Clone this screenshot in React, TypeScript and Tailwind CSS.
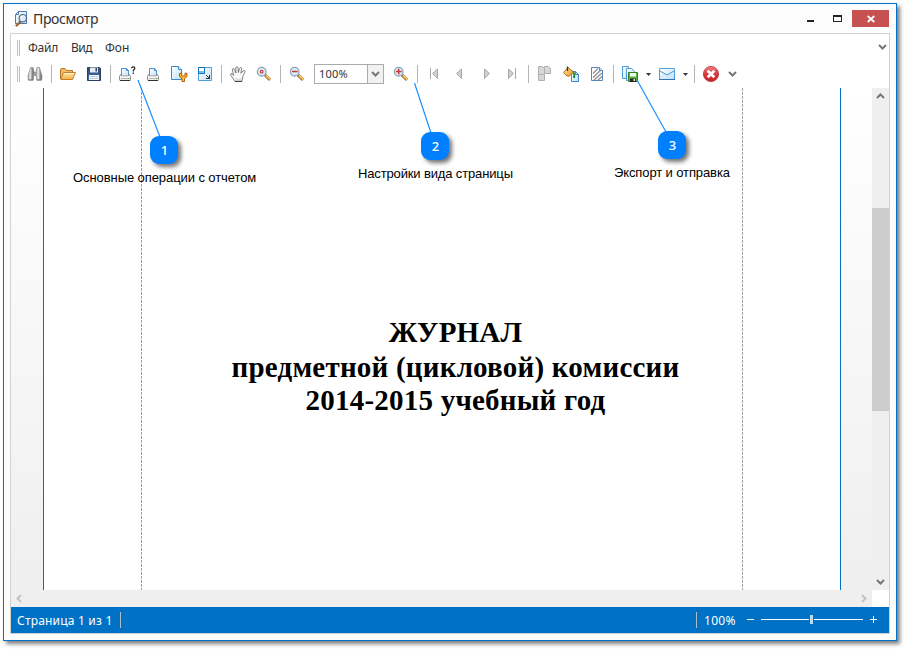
import React from "react";

type Kids = { children?: React.ReactNode };

function Glyph({ children, w = 16 }: Kids & { w?: number }) {
  return (
    <svg width={w} height="16" viewBox={`0 0 ${w} 16`} className="block shrink-0 overflow-visible">
      {children}
    </svg>
  );
}

function Slot({ children }: Kids) {
  return <div className="flex h-[26px] w-[26px] shrink-0 items-center justify-center">{children}</div>;
}

function Sep() {
  return (
    <div className="flex w-[7px] shrink-0 items-center pl-[3px]">
      <div className="h-[18px] w-px bg-[#b5b5b5]" />
    </div>
  );
}

function Grip() {
  return <div className="mr-[2px] ml-[6px] h-[16px] w-[3px] shrink-0 border-x border-[#bdbdbd]" />;
}

function Chevron({ dir = "down", color = "#777777" }: { dir?: "down" | "up" | "left" | "right"; color?: string }) {
  const d = {
    down: "M1 2 L4.5 5.5 L8 2",
    up: "M1 6 L4.5 2.5 L8 6",
    left: "M6 1 L2.5 4.5 L6 8",
    right: "M3 1 L6.5 4.5 L3 8",
  }[dir];
  return (
    <svg width="9" height="9" viewBox="0 0 9 9" className="block shrink-0">
      <path d={d} fill="none" stroke={color} strokeWidth="2" />
    </svg>
  );
}

function DropArrow() {
  return (
    <div className="flex w-[11px] shrink-0 items-center pl-[3px]">
      <svg width="5" height="3" viewBox="0 0 5 3" className="block">
        <path d="M0 0h5L2.5 3z" fill="#333" />
      </svg>
    </div>
  );
}

function Defs() {
  return (
    <svg width="0" height="0" className="absolute">
      <defs>
        <linearGradient id="paper" x1="0" y1="0" x2="1" y2="1">
          <stop offset="0" stopColor="#ffffff" />
          <stop offset="1" stopColor="#bfe0f8" />
        </linearGradient>
        <linearGradient id="folder" x1="0" y1="0" x2="0" y2="1">
          <stop offset="0" stopColor="#ffe7a6" />
          <stop offset="1" stopColor="#efb04c" />
        </linearGradient>
        <linearGradient id="metal" x1="0" y1="0" x2="0" y2="1">
          <stop offset="0" stopColor="#ffffff" />
          <stop offset="1" stopColor="#c4c4c4" />
        </linearGradient>
        <linearGradient id="tube" x1="0" y1="0" x2="1" y2="0">
          <stop offset="0" stopColor="#8a8a8a" />
          <stop offset="0.35" stopColor="#f4f4f4" />
          <stop offset="0.7" stopColor="#8c8c8c" />
          <stop offset="1" stopColor="#606060" />
        </linearGradient>
        <linearGradient id="navy" x1="0" y1="0" x2="0" y2="1">
          <stop offset="0" stopColor="#304a6c" />
          <stop offset="1" stopColor="#3f70aa" />
        </linearGradient>
        <linearGradient id="gold" x1="0" y1="0" x2="1" y2="1">
          <stop offset="0" stopColor="#fff2b0" />
          <stop offset="1" stopColor="#e88a10" />
        </linearGradient>
        <linearGradient id="red" x1="0" y1="0" x2="0" y2="1">
          <stop offset="0" stopColor="#ee8585" />
          <stop offset="0.5" stopColor="#d63b40" />
          <stop offset="1" stopColor="#c81f27" />
        </linearGradient>
      </defs>
    </svg>
  );
}

function AppIcon() {
  return (
    <Glyph>
      <path d="M4.500 .5H12.500V12.500H1.500V3.500z" fill="url(#paper)" stroke="#4d7ab5" />
      <path d="M4.500 .5V3.500H1.500" fill="none" stroke="#4d7ab5" />
      <path d="M6.500 10.500L2 15" stroke="#8a4b1c" strokeWidth="2.400" />
      <path d="M6 10.500L2 14.500" stroke="#e39a48" strokeWidth="1" />
      <circle cx="8.800" cy="7.200" r="3.700" fill="#dceefb" fillOpacity=".9" stroke="#56667a" strokeWidth="1.200" />
      <path d="M6.800 7.200A2 2 0 0 1 8.800 5.200" stroke="#fff" fill="none" />
    </Glyph>
  );
}

function Binoculars() {
  return (
    <Glyph>
      <path d="M3.500 1.500H6L7 5.500L6.300 14H1.300L1 10z" fill="url(#tube)" stroke="#8e8e8e" strokeWidth=".7" />
      <path d="M10 1.500H12.500L15 10L14.700 14H9.700L9 5.500z" fill="url(#tube)" stroke="#8e8e8e" strokeWidth=".7" />
      <path d="M7 6H9V10H7z" fill="#9b9b9b" />
      <path d="M1.500 14H6.300M9.700 14H14.500" stroke="#777" />
    </Glyph>
  );
}

function FolderOpen() {
  return (
    <Glyph>
      <path d="M.5 13V3.500Q.5 2.500 1.500 2.500H5L6.500 4.500H12.500V7" fill="#f3ba62" stroke="#b8752a" />
      <path d="M3.500 6.500H15.500L12.500 13.500H.8z" fill="url(#folder)" stroke="#c2802c" />
      <path d="M4.300 7.500H14" stroke="#fff3cf" />
    </Glyph>
  );
}

function Floppy() {
  return (
    <Glyph>
      <path d="M1.500 1.500H13.500L14.500 2.500V14.500H1.500z" fill="url(#navy)" stroke="#2a3f5c" />
      <path d="M4 1.500H12V6.500H4z" fill="#e4ebf3" />
      <path d="M9.500 2H11V5.500H9.500z" fill="#2e4462" />
      <path d="M3 9H13V14H3z" fill="#fafcff" />
      <path d="M3.500 10.500H12.500M3.500 12.500H12.500" stroke="#b9c8d8" />
    </Glyph>
  );
}

function PrinterShape() {
  return (
    <>
      <path d="M4.500 2.500H9.500L11.500 4.500V10.500H4.500z" fill="url(#paper)" stroke="#4b93d4" />
      <path d="M9.500 2.500V4.500H11.500" fill="none" stroke="#4b93d4" />
      <path d="M3.500 8.500H4.500V10H11.500V8.500H12.500L13.500 10.500V13.500Q13.500 14.500 12.500 14.500H3.500Q2.500 14.500 2.500 13.500V10.500z" fill="#ececec" stroke="#8b8b8b" />
      <path d="M3.500 11H12.500" stroke="#ffffff" />
      <path d="M4 12.500H12" stroke="#b5b5b5" />
      <path d="M11 12.500H12.500" stroke="#55b848" />
      <path d="M3 14.500H13" stroke="#333" />
    </>
  );
}

function Printer() {
  return (
    <Glyph>
      <PrinterShape />
    </Glyph>
  );
}

function PrinterQuery() {
  return (
    <Glyph>
      <g transform="translate(-2 0)">
        <PrinterShape />
      </g>
      <path d="M12.700 2.300Q12.700 .8 14.200 .8Q15.800 .8 15.800 2.300Q15.800 3.400 14.300 4.200V5.400M14.300 6.500V8" fill="none" stroke="#222" strokeWidth="1.300" />
    </Glyph>
  );
}

function PageSetup() {
  return (
    <Glyph>
      <path d="M.5 .5H7.500L10.500 3.500V13.500H.5z" fill="url(#paper)" stroke="#3c8bd0" />
      <path d="M7.500 .5V3.500H10.500" fill="#e7f4ff" stroke="#3c8bd0" />
      <path d="M8.500 7.500V10.500L11 12.500V15.500H13.500V12.500L16 10.500V7.500L14 7V10H10.700V7z" fill="#ffc524" stroke="#b55a14" />
    </Glyph>
  );
}

function ScaleIcon() {
  return (
    <Glyph>
      <path d="M1.500 1.500H14.500V14.500H1.500z" fill="url(#paper)" stroke="#4aa0d8" />
      <path d="M1.500 1.500H7.500V7.500H1.500z" fill="#fff" stroke="#1670bd" />
      <path d="M2 6H7" stroke="#74c3ef" strokeWidth="2" />
      <path d="M9 9L12.500 12.500M12.500 9V12.500H9" fill="none" stroke="#333" />
    </Glyph>
  );
}

function Hand() {
  return (
    <Glyph>
      <path
        d="M5 15.500L1 9.500Q.1 8 1 7.500Q2.200 7.200 3.700 9.500L2.300 4Q2.200 2.500 3.300 2.500Q4.200 2.600 4.700 4.500L6 7L5.700 2Q5.900 .7 7 .8Q8 .8 8 2.200L8.400 6.500L9.500 2.500Q10 1.200 11 1.500Q12 1.800 11.600 3.200L10.900 7.300L13 5Q14 4 14.800 4.800Q15.600 5.500 14.700 6.700Q12.900 9.300 12.500 12L11.800 15.500z"
        fill="#fafafa"
        stroke="#626262"
        strokeWidth=".8"
      />
      <path d="M5 15.300H12" stroke="#333" />
      <path d="M5 12.500Q8 14.500 11.500 12.500" fill="none" stroke="#cfcfcf" />
    </Glyph>
  );
}

function Magnifier({ mark }: { mark: "dot" | "minus" | "plus" }) {
  return (
    <Glyph>
      <path d="M9 9L14 13.800" stroke="#9a6a2c" strokeWidth="3" />
      <path d="M10 9.500L14 13.300" stroke="#f6c25a" strokeWidth="1.800" />
      <circle cx="5.700" cy="5.700" r="4.300" fill="#d9ebf9" stroke="#8ea3b8" strokeWidth="1.300" />
      {mark === "dot" && <circle cx="5.700" cy="5.700" r="1.300" fill="#fff" stroke="#c73b34" strokeWidth="1.200" />}
      {mark !== "dot" && <path d="M3 5.500H8.500" stroke="#c73b34" strokeWidth="1.500" />}
      {mark === "plus" && <path d="M5.700 2.800V8.400" stroke="#c73b34" strokeWidth="1.500" />}
    </Glyph>
  );
}

function Nav({ kind }: { kind: "first" | "prev" | "next" | "last" }) {
  const tri = {
    first: "M11.500 3L6.500 7.500L11.500 12.500z",
    prev: "M9.500 3L4.500 7.500L9.500 12.500z",
    next: "M6.500 3L11.500 7.500L6.500 12.500z",
    last: "M4.500 3L9.500 7.500L4.500 12.500z",
  }[kind];
  return (
    <Glyph>
      <path d={tri} fill="#cfcfcf" stroke="#a8a8a8" />
      {kind === "first" && <path d="M4.500 2V13" stroke="#a6a6a6" />}
      {kind === "last" && <path d="M11.500 2V13" stroke="#a6a6a6" />}
    </Glyph>
  );
}

function MultiPage() {
  return (
    <Glyph>
      <g fill="#d6d6d6" stroke="#b0b0b0">
        <path d="M1.500 8.500H7.500V14.500H1.500z" />
        <path d="M7.500 .5H11.500L13.500 2.500V7.500H7.500z" />
        <path d="M1.500 .5H5.500L7.500 2.500V8.500H1.500z" />
      </g>
    </Glyph>
  );
}

function FillIcon() {
  return (
    <Glyph>
      <path d="M8.500 5.500H12.500L15.500 8.500V15.500H8.500z" fill="url(#paper)" stroke="#3c8bd0" />
      <path d="M12.500 5.500V8.500H15.500" fill="none" stroke="#3c8bd0" />
      <path d="M9.500 5.500Q12 7 11 12" fill="none" stroke="#1f8b3c" strokeWidth="2" />
      <path d="M5 1.500L10.500 6Q9 8 5.500 10.500Q3 10 .5 6.500z" fill="url(#gold)" stroke="#b56311" strokeWidth=".9" />
      <path d="M4.500 .5V5" stroke="#333" strokeWidth="1.300" />
    </Glyph>
  );
}

function Watermark() {
  return (
    <Glyph>
      <path d="M2.500 1.500H10.500L13.500 4.500V14.500H2.500z" fill="#fff" stroke="#5686bb" />
      <path d="M4 7.500L9 2.500M4 11.500L12 4M5 14L13 7M9 14L13 10.500" stroke="#909090" strokeWidth="1.300" />
      <path d="M10.500 1.500V4.500H13.500" fill="#d7ecfb" stroke="#5686bb" />
    </Glyph>
  );
}

function ExportIcon() {
  return (
    <Glyph>
      <path d="M.5 .5H6.500V12.500H.5z" fill="url(#paper)" stroke="#4f9bd8" />
      <path d="M4.500 2.500H9.500L12.500 5.500V14.500H4.500z" fill="url(#paper)" stroke="#4f9bd8" />
      <path d="M6.500 6.500H15.500V15.500H6.500z" fill="#5cb645" stroke="#2f7d25" />
      <path d="M8 7H14V10.500H8z" fill="#efffe9" />
      <path d="M8 12.500H14V16H8z" fill="#272727" />
      <path d="M11.500 13H13V15H11.500z" fill="#eee" />
    </Glyph>
  );
}

function Mail() {
  return (
    <Glyph>
      <path d="M.5 2.500H15.500V13.500H.5z" fill="url(#paper)" stroke="#58a1d8" />
      <path d="M1 5L8 9L15 5" fill="none" stroke="#4a98d0" />
      <path d="M1 13L5.500 8.500M15 13L10.500 8.500" stroke="#c5e2f6" />
      <path d="M0 13.500H16" stroke="#2c75b9" />
    </Glyph>
  );
}

function CloseRound() {
  return (
    <Glyph>
      <circle cx="8" cy="8" r="7.600" fill="url(#red)" stroke="#b92b31" strokeWidth=".8" />
      <path d="M4.700 4.700L11.300 11.300M11.300 4.700L4.700 11.300" stroke="#fff" strokeWidth="2.700" />
    </Glyph>
  );
}

function Callout({ n, className }: { n: string; className: string }) {
  return (
    <div
      className={`absolute flex h-[28px] w-[28px] items-center justify-center rounded-[9px] bg-[#0080ff] pt-px pl-px font-['Noto_Sans',sans-serif] text-[13px] font-medium text-white shadow-[3px_3px_4px_rgba(0,0,0,0.55)] ${className}`}
    >
      {n}
    </div>
  );
}

export default function App() {
  return (
    <div className="relative h-[649px] w-[905px] overflow-hidden bg-white p-[3px] font-['Noto_Sans',sans-serif]">
      <Defs />
      <div className="flex h-[638px] w-[894px] flex-col border border-[#0072c6] bg-[#fcfcfc] shadow-[3px_3px_4px_rgba(0,0,0,0.5)]">
        <header className="flex h-[29px] shrink-0 items-start">
          <div className="mt-[7px] ml-[10px]">
            <AppIcon />
          </div>
          <div className="mt-[5px] ml-[3px] text-[14px] leading-[20px] tracking-[-0.35px] whitespace-nowrap text-[#333]">Просмотр</div>
          <div className="ml-auto flex h-[29px]">
            <div className="mt-[16px] h-[2px] w-[7px] bg-[#222]" />
            <div className="mt-[11px] mr-[10px] ml-[19px] h-[7px] w-[9px] border border-t-2 border-[#222]" />
            <div className="mt-[6px] mr-[7px] flex h-[17px] w-[37px] items-center justify-center bg-[#c75050]">
              <svg width="8" height="8" viewBox="0 0 8 8">
                <path d="M.7 1L7.300 7M7.300 1L.7 7" stroke="#fff" strokeWidth="1.700" />
              </svg>
            </div>
          </div>
        </header>

        <main className="ml-[6px] flex h-[601px] w-[880px] shrink-0 flex-col border border-[#d2d2d2] bg-white">
          <nav className="flex h-[27px] shrink-0 items-center text-[12px] leading-[16px] text-[#333]">
            <Grip />
            <span className="ml-[6px] w-[43px] tracking-[-0.2px]">Файл</span>
            <span className="w-[34px] tracking-[-0.5px]">Вид</span>
            <span>Фон</span>
            <div className="mr-[2px] ml-auto">
              <Chevron />
            </div>
          </nav>

          <div className="flex h-[27px] shrink-0 items-center pb-px">
            <Grip />
            <Slot><Binoculars /></Slot>
            <Sep />
            <Slot><FolderOpen /></Slot>
            <Slot><Floppy /></Slot>
            <Sep />
            <Slot><PrinterQuery /></Slot>
            <Slot><Printer /></Slot>
            <Slot><PageSetup /></Slot>
            <Slot><ScaleIcon /></Slot>
            <Sep />
            <Slot><Hand /></Slot>
            <Slot><Magnifier mark="dot" /></Slot>
            <Sep />
            <Slot><Magnifier mark="minus" /></Slot>
            <div className="mx-[4px] flex h-[20px] w-[70px] shrink-0 border border-[#ababab] bg-white">
              <span className="flex-1 pl-[4px] text-[11px] leading-[18px] tracking-[0.2px] text-[#333]">100%</span>
              <div className="flex w-[16px] items-center justify-center border-l border-[#ababab] bg-[#f1f1f1]">
                <Chevron />
              </div>
            </div>
            <Slot><Magnifier mark="plus" /></Slot>
            <Sep />
            <Slot><Nav kind="first" /></Slot>
            <Slot><Nav kind="prev" /></Slot>
            <Slot><Nav kind="next" /></Slot>
            <Slot><Nav kind="last" /></Slot>
            <Sep />
            <Slot><MultiPage /></Slot>
            <Slot><FillIcon /></Slot>
            <Slot><Watermark /></Slot>
            <Sep />
            <Slot><ExportIcon /></Slot>
            <DropArrow />
            <Slot><Mail /></Slot>
            <DropArrow />
            <Sep />
            <Slot><CloseRound /></Slot>
            <div className="ml-[4px]">
              <Chevron />
            </div>
          </div>

          <div className="flex h-[502px] shrink-0">
            <div className="flex flex-1 bg-linear-to-b from-white to-[#efefef]">
              <div className="ml-[32px] flex w-[798px] border-x border-[#0072c6] bg-white">
                <div className="ml-[97px] w-[602px] border-x border-transparent bg-[repeating-linear-gradient(to_bottom,#a0a0a0_0_3px,transparent_3px_4px)] bg-[length:1px_100%] bg-no-repeat [background-origin:border-box]">
                  <div className="-mr-px h-full bg-[repeating-linear-gradient(to_bottom,#a0a0a0_0_3px,transparent_3px_4px)] bg-[length:1px_100%] bg-right bg-no-repeat pt-[228px] pl-[26px] text-center font-['Liberation_Serif',serif] text-[29px] leading-[33px] font-bold tracking-[0.22px] whitespace-nowrap text-black">
                    <div>ЖУРНАЛ</div>
                    <div className="pt-[2px]">предметной (цикловой) комиссии</div>
                    <div>2014-2015 учебный год</div>
                  </div>
                </div>
              </div>
            </div>
            <div className="flex w-[17px] flex-col items-center bg-[#efefef]">
              <div className="mt-[4px]"><Chevron dir="up" /></div>
              <div className="mt-[107px] h-[203px] w-full bg-[#cdcdcd]" />
              <div className="mt-auto mb-[3px]"><Chevron /></div>
            </div>
          </div>

          <div className="flex h-[17px] shrink-0">
            <div className="flex flex-1 items-center justify-between bg-[#efefef] px-[4px]">
              <Chevron dir="left" color="#c3c3c3" />
              <Chevron dir="right" color="#c3c3c3" />
            </div>
            <div className="w-[17px] bg-white" />
          </div>

          <footer className="flex h-[26px] shrink-0 items-center bg-[#0072c6] text-[12px] text-white">
            <span className="w-[109px] pt-[2px] pl-[6px] tracking-[0.2px] whitespace-nowrap">Страница 1 из 1</span>
            <div className="h-[16px] w-px bg-[#a9bccb]" />
            <div className="ml-auto h-[16px] w-px bg-[#a9bccb]" />
            <span className="w-[50px] pt-[2px] pl-[7px] tracking-[0.3px]">100%</span>
            <div className="mb-px h-px w-[7px] bg-white" />
            <div className="mr-[7px] ml-[7px] flex w-[102px] items-center pb-px">
              <div className="h-px w-[48px] bg-white" />
              <div className="mx-px h-[9px] w-[3px] bg-[#b8dcf5]" />
              <div className="h-px flex-1 bg-white" />
            </div>
            <svg width="7" height="7" viewBox="0 0 7 7" className="mr-[12px] mb-px">
              <path d="M0 3.500H7M3.500 0V7" stroke="#fff" />
            </svg>
          </footer>
        </main>
      </div>

      <svg className="pointer-events-none absolute top-0 left-0" width="905" height="649" viewBox="0 0 905 649">
        <path d="M138 80L160 137M414.500 83L431 133M637 80L666 132" fill="none" stroke="#1e8fff" strokeWidth="1.200" />
      </svg>
      <Callout n="1" className="top-[136px] left-[150px]" />
      <Callout n="2" className="top-[132px] left-[421px]" />
      <Callout n="3" className="top-[131px] left-[658px]" />
      <div className="absolute top-[170px] left-[73px] font-['Liberation_Sans',sans-serif] text-[13px] leading-[16px] tracking-[-0.08px] whitespace-nowrap text-black">Основные операции с отчетом</div>
      <div className="absolute top-[166px] left-[358px] font-['Liberation_Sans',sans-serif] text-[13px] leading-[16px] tracking-[-0.14px] whitespace-nowrap text-black">Настройки вида страницы</div>
      <div className="absolute top-[165px] left-[614px] font-['Liberation_Sans',sans-serif] text-[13px] leading-[16px] tracking-[-0.11px] whitespace-nowrap text-black">Экспорт и отправка</div>
    </div>
  );
}
